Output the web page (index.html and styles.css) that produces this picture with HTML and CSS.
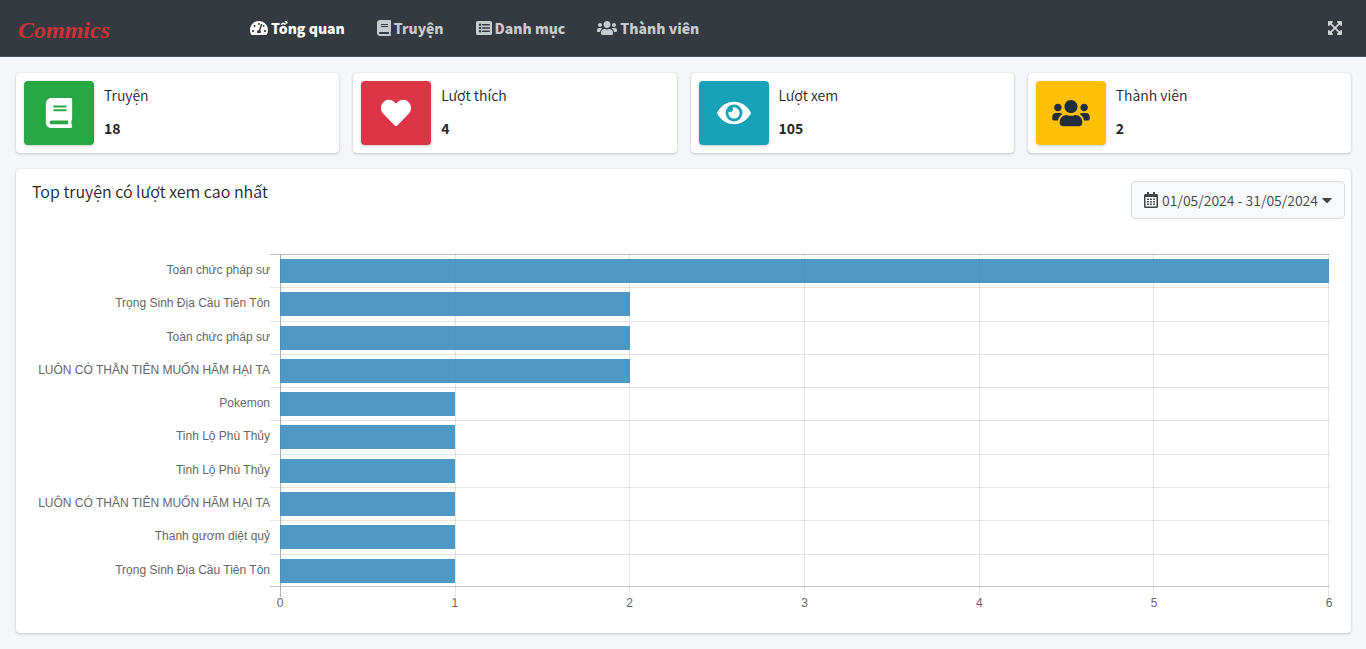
FILE: index.html
```html
<!DOCTYPE html>
<html lang="vi">
<head>
<meta charset="utf-8">
<meta name="viewport" content="width=device-width, initial-scale=1">
<title>Commics</title>
<link rel="stylesheet" href="styles.css">
</head>
<body>
<svg class="sprite" aria-hidden="true">
  <symbol id="book" viewBox="0 0 448 512"><path d="M448 360V24c0-13.3-10.7-24-24-24H96C43 0 0 43 0 96v320c0 53 43 96 96 96h328c13.3 0 24-10.7 24-24v-16c0-7.5-3.5-14.3-8.9-18.7-4.2-15.4-4.2-59.3 0-74.7 5.4-4.3 8.9-11.1 8.9-18.6zM128 134c0-3.3 2.7-6 6-6h212c3.3 0 6 2.7 6 6v20c0 3.3-2.7 6-6 6H134c-3.3 0-6-2.7-6-6v-20zm0 64c0-3.3 2.7-6 6-6h212c3.3 0 6 2.7 6 6v20c0 3.3-2.7 6-6 6H134c-3.3 0-6-2.7-6-6v-20zm253.4 250H96c-17.7 0-32-14.3-32-32 0-17.6 14.4-32 32-32h285.4c-1.9 17.1-1.9 46.9 0 64z"/></symbol>
  <symbol id="heart" viewBox="0 0 512 512"><path d="M462.3 62.6C407.5 15.9 326 24.3 275.7 76.2L256 96.5l-19.7-20.3C186.1 24.3 104.5 15.9 49.7 62.6c-62.8 53.6-66.1 149.8-9.9 207.9l193.5 199.8c12.5 12.9 32.8 12.9 45.3 0l193.5-199.8c56.3-58.1 53-154.3-9.8-207.9z"/></symbol>
  <symbol id="eye" viewBox="0 0 576 512"><path d="M572.52 241.4C518.29 135.59 410.93 64 288 64S57.68 135.64 3.48 241.41a32.35 32.35 0 0 0 0 29.19C57.71 376.41 165.07 448 288 448s230.32-71.64 284.52-177.41a32.35 32.35 0 0 0 0-29.19zM288 400a144 144 0 1 1 144-144 143.93 143.93 0 0 1-144 144zm0-240a95.31 95.31 0 0 0-25.31 3.79 47.85 47.85 0 0 1-66.9 66.9A95.78 95.78 0 1 0 288 160z"/></symbol>
  <symbol id="users" viewBox="0 0 640 512"><path d="M96 224c35.3 0 64-28.7 64-64s-28.7-64-64-64-64 28.7-64 64 28.7 64 64 64zm448 0c35.3 0 64-28.7 64-64s-28.7-64-64-64-64 28.7-64 64 28.7 64 64 64zm32 32h-64c-17.6 0-33.5 7.1-45.1 18.6 40.3 22.1 68.9 62 75.1 109.4h66c17.7 0 32-14.3 32-32v-32c0-35.3-28.7-64-64-64zm-256 0c61.9 0 112-50.1 112-112S381.9 32 320 32 208 82.1 208 144s50.1 112 112 112zm76.8 32h-8.3c-20.8 10-43.9 16-68.5 16s-47.6-6-68.5-16h-8.3C179.6 288 128 339.6 128 403.2V432c0 26.5 21.5 48 48 48h288c26.5 0 48-21.5 48-48v-28.8c0-63.6-51.6-115.2-115.2-115.2zm-223.7-13.4C161.5 263.1 145.6 256 128 256H64c-35.3 0-64 28.7-64 64v32c0 17.7 14.3 32 32 32h65.9c6.3-47.4 34.9-87.3 75.2-109.4z"/></symbol>
  <symbol id="gauge" viewBox="0 0 576 512"><path d="M288 32C128.94 32 0 160.94 0 320c0 52.8 14.25 102.26 39.06 144.8 5.61 9.62 16.3 15.2 27.44 15.2h443c11.14 0 21.83-5.58 27.44-15.2C561.75 422.26 576 372.8 576 320c0-159.06-128.94-288-288-288zm0 64c14.71 0 26.58 10.13 30.32 23.65-1.11 2.26-2.64 4.23-3.45 6.67l-9.22 27.67c-5.13 3.49-10.97 6.01-17.64 6.01-17.67 0-32-14.33-32-32S270.33 96 288 96zM96 384c-17.67 0-32-14.33-32-32s14.33-32 32-32 32 14.33 32 32-14.33 32-32 32zm48-160c-17.67 0-32-14.33-32-32s14.33-32 32-32 32 14.33 32 32-14.33 32-32 32zm246.77-72.41l-61.33 184C343.13 347.33 352 364.54 352 384c0 11.72-3.38 22.55-8.88 32H232.88c-5.5-9.45-8.88-20.28-8.88-32 0-33.94 26.5-61.43 59.9-63.59l61.34-184.01c4.17-12.56 17.73-19.45 30.36-15.17 12.57 4.19 19.35 17.79 15.17 30.36zm14.66 57.2l15.52-46.55c3.47-1.29 7.13-2.23 11.05-2.23 17.67 0 32 14.33 32 32s-14.33 32-32 32c-11.38-.01-20.89-6.28-26.57-15.22zM480 384c-17.67 0-32-14.33-32-32s14.33-32 32-32 32 14.33 32 32-14.33 32-32 32z"/></symbol>
  <symbol id="list" viewBox="0 0 512 512"><path fill-rule="evenodd" d="M48 32h416a48 48 0 0 1 48 48v352a48 48 0 0 1-48 48H48a48 48 0 0 1-48-48V80a48 48 0 0 1 48-48zM128 112a40 40 0 1 0 0 80 40 40 0 0 0 0-80zm0 104a40 40 0 1 0 0 80 40 40 0 0 0 0-80zm0 104a40 40 0 1 0 0 80 40 40 0 0 0 0-80zM204 128h232a12 12 0 0 1 12 12v24a12 12 0 0 1-12 12H204a12 12 0 0 1-12-12v-24a12 12 0 0 1 12-12zm0 104h232a12 12 0 0 1 12 12v24a12 12 0 0 1-12 12H204a12 12 0 0 1-12-12v-24a12 12 0 0 1 12-12zm0 104h232a12 12 0 0 1 12 12v24a12 12 0 0 1-12 12H204a12 12 0 0 1-12-12v-24a12 12 0 0 1 12-12z"/></symbol>
  <symbol id="expand" viewBox="0 0 448 512"><path d="M24 32h112c21 0 32 26 17 41l-36 36 107 107 107-107-36-36c-15-15-4-41 17-41h112c13 0 24 11 24 24v112c0 21-26 32-41 17l-36-36-107 107 107 107 36-36c15-15 41-4 41 17v112c0 13-11 24-24 24H312c-21 0-32-26-17-41l36-36-107-107-107 107 36 36c15 15 4 41-17 41H24c-13 0-24-11-24-24V344c0-21 26-32 41-17l36 36 107-107L77 149l-36 36c-15 15-41 4-41-17V56c0-13 11-24 24-24z"/></symbol>
  <symbol id="calendar" viewBox="0 0 448 512"><path fill-rule="evenodd" d="M400 64h-48V12c0-7-5-12-12-12h-40c-7 0-12 5-12 12v52H160V12c0-7-5-12-12-12h-40c-7 0-12 5-12 12v52H48C21 64 0 86 0 112v352c0 27 21 48 48 48h352c27 0 48-21 48-48V112c0-26-21-48-48-48zM48 160h352v298c0 3-3 6-6 6H54c-3 0-6-3-6-6z"/><path d="M100 205h56v50h-56zm96 0h56v50h-56zm96 0h56v50h-56zM100 285h56v50h-56zm96 0h56v50h-56zm96 0h56v50h-56zM100 365h56v50h-56zm96 0h56v50h-56zm96 0h56v50h-56z"/></symbol>
  <symbol id="caret" viewBox="0 0 320 512"><path d="M31 192h257c18 0 27 22 15 34L174 355c-8 7-20 7-28 0L17 226c-13-12-4-34 14-34z"/></symbol>
</svg>

<header class="navbar">
  <a class="brand" href="#">Commics</a>
  <nav class="menu">
    <a class="menu-link active" href="#"><svg class="icon wide"><use href="#gauge"/></svg>Tổng quan</a>
    <a class="menu-link" href="#"><svg class="icon book"><use href="#book"/></svg>Truyện</a>
    <a class="menu-link" href="#"><svg class="icon"><use href="#list"/></svg>Danh mục</a>
    <a class="menu-link" href="#"><svg class="icon users"><use href="#users"/></svg>Thành viên</a>
  </nav>
  <button class="expand" type="button" aria-label="Toàn màn hình"><svg class="icon book"><use href="#expand"/></svg></button>
</header>

<main class="content">
  <section class="stats">
    <article class="stat"><span class="stat-icon green"><svg><use href="#book"/></svg></span><div class="stat-text"><span>Truyện</span><strong>18</strong></div></article>
    <article class="stat"><span class="stat-icon red"><svg><use href="#heart"/></svg></span><div class="stat-text"><span>Lượt thích</span><strong>4</strong></div></article>
    <article class="stat"><span class="stat-icon teal"><svg><use href="#eye"/></svg></span><div class="stat-text"><span>Lượt xem</span><strong>105</strong></div></article>
    <article class="stat"><span class="stat-icon yellow"><svg><use href="#users"/></svg></span><div class="stat-text"><span>Thành viên</span><strong>2</strong></div></article>
  </section>

  <section class="card">
    <div class="card-header">
      <h3 class="card-title">Top truyện có lượt xem cao nhất</h3>
      <button class="range" type="button"><svg class="icon book"><use href="#calendar"/></svg><span>01/05/2024 - 31/05/2024</span><svg class="icon caret"><use href="#caret"/></svg></button>
    </div>
    <div class="chart">
      <div class="plot">
        <div class="gridlines"><i></i><i></i><i></i><i></i><i></i><i></i></div>
        <div class="row"><span class="label">Toàn chức pháp sư</span><div class="track"><div class="bar" style="width:100%"></div></div></div>
        <div class="row"><span class="label">Trọng Sinh Địa Cầu Tiên Tôn</span><div class="track"><div class="bar" style="width:33.333%"></div></div></div>
        <div class="row"><span class="label">Toàn chức pháp sư</span><div class="track"><div class="bar" style="width:33.333%"></div></div></div>
        <div class="row"><span class="label">LUÔN CÓ THẦN TIÊN MUỐN HÃM HẠI TA</span><div class="track"><div class="bar" style="width:33.333%"></div></div></div>
        <div class="row"><span class="label">Pokemon</span><div class="track"><div class="bar" style="width:16.667%"></div></div></div>
        <div class="row"><span class="label">Tinh Lộ Phù Thủy</span><div class="track"><div class="bar" style="width:16.667%"></div></div></div>
        <div class="row"><span class="label">Tinh Lộ Phù Thủy</span><div class="track"><div class="bar" style="width:16.667%"></div></div></div>
        <div class="row"><span class="label">LUÔN CÓ THẦN TIÊN MUỐN HÃM HẠI TA</span><div class="track"><div class="bar" style="width:16.667%"></div></div></div>
        <div class="row"><span class="label">Thanh gươm diệt quỷ</span><div class="track"><div class="bar" style="width:16.667%"></div></div></div>
        <div class="row"><span class="label">Trọng Sinh Địa Cầu Tiên Tôn</span><div class="track"><div class="bar" style="width:16.667%"></div></div></div>
      </div>
      <div class="axis"><span>0</span><span>1</span><span>2</span><span>3</span><span>4</span><span>5</span><span>6</span></div>
    </div>
  </section>
</main>
</body>
</html>
```
FILE: styles.css
```css
*, *::before, *::after { box-sizing: border-box; }
body {
  margin: 0;
  background: #f4f6f9;
  color: #212529;
  font-family: "Noto Sans CJK JP", "Noto Sans", sans-serif;
  font-size: 14px;
  font-weight: 350;
  line-height: 24px;
}
a { text-decoration: none; }
button { font: inherit; cursor: pointer; }
.sprite { display: none; }
.icon { width: 16px; height: 16px; fill: currentColor; flex: none; }
.icon.wide { width: 18px; }
.icon.book { width: 14px; }
.icon.users { width: 20px; }
.icon.caret { width: 10px; }

.navbar {
  display: flex;
  align-items: center;
  height: 57px;
  padding: 0 16px;
  background: #343a40;
  border-bottom: 1px solid #4b545c;
}
.brand {
  width: 218px;
  padding: 4px 0 0 2px;
  color: #c83237;
  font: italic bold 24px/32px "Liberation Serif", cursive;
}
.menu { display: flex; flex: 1; }
.menu-link {
  display: flex;
  align-items: center;
  gap: 3px;
  padding: 0 16px;
  color: #c8cbcd;
  font-weight: 900;
}
.menu-link.active { color: #fff; }
.expand {
  display: flex;
  padding: 8px;
  border: 0;
  background: none;
  color: #d0d2d4;
}

.content { padding: 16px 15px 16px 16px; }
.stats {
  display: grid;
  grid-template-columns: repeat(4, 1fr);
  gap: 14px;
  margin-bottom: 16px;
}
.stat, .card {
  background: #fff;
  border-radius: 4px;
  box-shadow: 0 0 1px rgba(0, 0, 0, .13), 0 1px 3px rgba(0, 0, 0, .2);
}
.stat { display: flex; gap: 10px; padding: 8px; }
.stat-icon {
  display: flex;
  align-items: center;
  justify-content: center;
  width: 70px;
  height: 64px;
  border-radius: 4px;
  color: #fff;
  box-shadow: 0 1px 3px rgba(0, 0, 0, .2);
}
.stat-icon svg { width: 38px; height: 30px; fill: currentColor; }
.green { background: #28a745; }
.red { background: #dc3545; }
.teal { background: #17a2b8; }
.yellow { background: #ffc107; color: #1f2d3d; }
.stat-text { display: flex; flex-direction: column; gap: 9px; padding-top: 2px; }
.stat-text strong { font-weight: 700; }

.card-header {
  display: flex;
  justify-content: space-between;
  align-items: flex-start;
  padding: 12px 6px 0 16px;
}
.card-title { margin: 0; font-size: 16px; font-weight: 350; line-height: 20px; }
.range {
  display: flex;
  align-items: center;
  gap: 4px;
  height: 38px;
  padding: 0 12px;
  border: 1px solid #ddd;
  border-radius: 4px;
  background: #f8f9fa;
  color: #444;
}

.chart {
  padding: 35px 22px 23px 16px;
  color: #666;
  font: 12px/14px "Liberation Sans", Arial, sans-serif;
}
.plot {
  position: relative;
  display: flex;
  flex-direction: column;
  height: 333px;
}
.row { display: flex; flex: 1; }
.label { width: 238px; padding-top: 9px; text-align: right; white-space: nowrap; }
.track {
  flex: 1;
  padding: 4px 0 0 10px;
  border-top: 1px solid #e5e5e5;
}
.row:nth-child(2) .track { border-top-color: #bfbfbf; }
.row:last-child .track { border-bottom: 1px solid #c4c4c4; }
.bar { position: relative; height: 24px; background: rgba(60, 141, 188, .9); }
.gridlines {
  position: absolute;
  inset: 0 0 -10px 248px;
  display: flex;
  border-left: 1px solid #b0b0b0;
}
.gridlines i { flex: 1; border-right: 1px solid rgba(0, 0, 0, .1); }
.axis {
  display: flex;
  justify-content: space-between;
  padding: 9px 0 0 238px;
  margin-right: -10px;
}
.axis span { width: 20px; text-align: center; }
```
